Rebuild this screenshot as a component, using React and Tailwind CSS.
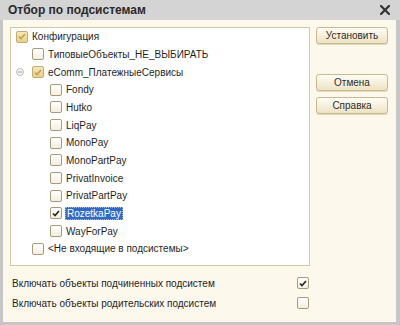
import React from "react";

const tree = [
  { label: "Конфигурация", level: 0, state: "partial" },
  { label: "ТиповыеОбъекты_НЕ_ВЫБИРАТЬ", level: 1 },
  { label: "eComm_ПлатежныеСервисы", level: 1, state: "partial", collapse: true },
  { label: "Fondy", level: 2 },
  { label: "Hutko", level: 2 },
  { label: "LiqPay", level: 2 },
  { label: "MonoPay", level: 2 },
  { label: "MonoPartPay", level: 2 },
  { label: "PrivatInvoice", level: 2 },
  { label: "PrivatPartPay", level: 2 },
  { label: "RozetkaPay", level: 2, state: "checked", selected: true },
  { label: "WayForPay", level: 2 },
  { label: "<Не входящие в подсистемы>", level: 1 },
];

const indent = ["pl-[5px]", "pl-[21px]", "pl-[39px]"];

export default function App() {
  return (
    <div className="flex h-[325px] w-[400px] flex-col bg-[#c6c6c6] font-['Liberation_Sans',Arial,sans-serif] text-[10px] text-[#1f1f1f]">
      <div className="flex h-[20px] shrink-0 items-center justify-between bg-[#d4d4d4] pl-[8px] pr-[10px]">
        <span className="text-[12px] font-bold text-[#2a2a2a]">Отбор по подсистемам</span>
        <svg width="10" height="10" viewBox="0 0 10 10">
          <path d="M1 1L9 9M9 1L1 9" stroke="#333" strokeWidth="2.2" strokeLinecap="square" />
        </svg>
      </div>

      <div className="mb-[3px] ml-[3px] mr-[4px] flex flex-1 flex-col bg-[#fcf8ec]">
        <div className="flex pl-[7px] pt-[7px]">
          <div className="h-[239px] w-[300px] border border-[#d2c8a8] bg-white">
            {tree.map((item) => (
              <TreeRow key={item.label} item={item} />
            ))}
          </div>

          <div className="ml-[6px] flex w-[72px] flex-col">
            <DialogButton>Установить</DialogButton>
            <div className="h-[30px]" />
            <DialogButton>Отмена</DialogButton>
            <div className="h-[6px]" />
            <DialogButton>Справка</DialogButton>
          </div>
        </div>

        <div className="mt-[7px] w-[306px] pl-[9px]">
          <div className="flex h-[20px] items-center justify-between">
            <span>Включать объекты подчиненных подсистем</span>
            <CheckBox state="checked" size="small" />
          </div>
          <div className="flex h-[20px] items-center justify-between">
            <span>Включать объекты родительских подсистем</span>
            <CheckBox size="small" />
          </div>
        </div>
      </div>
    </div>
  );
}

function TreeRow({ item }) {
  return (
    <div className={`relative flex h-[17.67px] items-center ${indent[item.level]}`}>
      {item.collapse && (
        <svg className="absolute left-[5px] top-1/2 -translate-y-1/2" width="8" height="8" viewBox="0 0 8 8">
          <circle cx="4" cy="4" r="3.4" fill="white" stroke="#a9a9a9" strokeWidth="0.9" />
          <path d="M2 4H6" stroke="#8a8a8a" strokeWidth="1" />
        </svg>
      )}
      <CheckBox state={item.state} />
      <span
        className={
          item.selected
            ? "ml-[3px] border border-dotted border-[#9bb8e8] bg-[#316ac5] px-[1px] leading-[11px] text-white"
            : "ml-[4px]"
        }
      >
        {item.label}
      </span>
    </div>
  );
}

function CheckBox({ state, size }) {
  const box = size === "small" ? "h-[12px] w-[12px]" : "h-[12px] w-[12px]";
  if (state === "partial") {
    return (
      <span className={`flex ${box} shrink-0 items-center justify-center rounded-[2px] border border-[#c3ad6c] bg-gradient-to-b from-[#f6e7b8] to-[#e7d08e]`}>
        <svg width="8" height="7" viewBox="0 0 8 7">
          <path d="M1 3.5L3 5.5L7 1" fill="none" stroke="#c29f49" strokeWidth="1.6" />
        </svg>
      </span>
    );
  }
  return (
    <span className={`flex ${box} shrink-0 items-center justify-center rounded-[2px] border border-[#a89b78] bg-gradient-to-b from-white to-[#f3eee0]`}>
      {state === "checked" && (
        <svg width="8" height="7" viewBox="0 0 8 7">
          <path d="M1 3.5L3 5.5L7 1" fill="none" stroke="#222" strokeWidth="1.6" />
        </svg>
      )}
    </span>
  );
}

function DialogButton({ children }) {
  return (
    <button className="flex h-[17px] w-full items-center justify-center rounded-[3px] border border-[#c8b98f] bg-gradient-to-b from-[#fffdf6] to-[#ede2c3] text-[10px] text-[#2e2e2e] shadow-[0_1px_0_#e2d8ba]">
      {children}
    </button>
  );
}
